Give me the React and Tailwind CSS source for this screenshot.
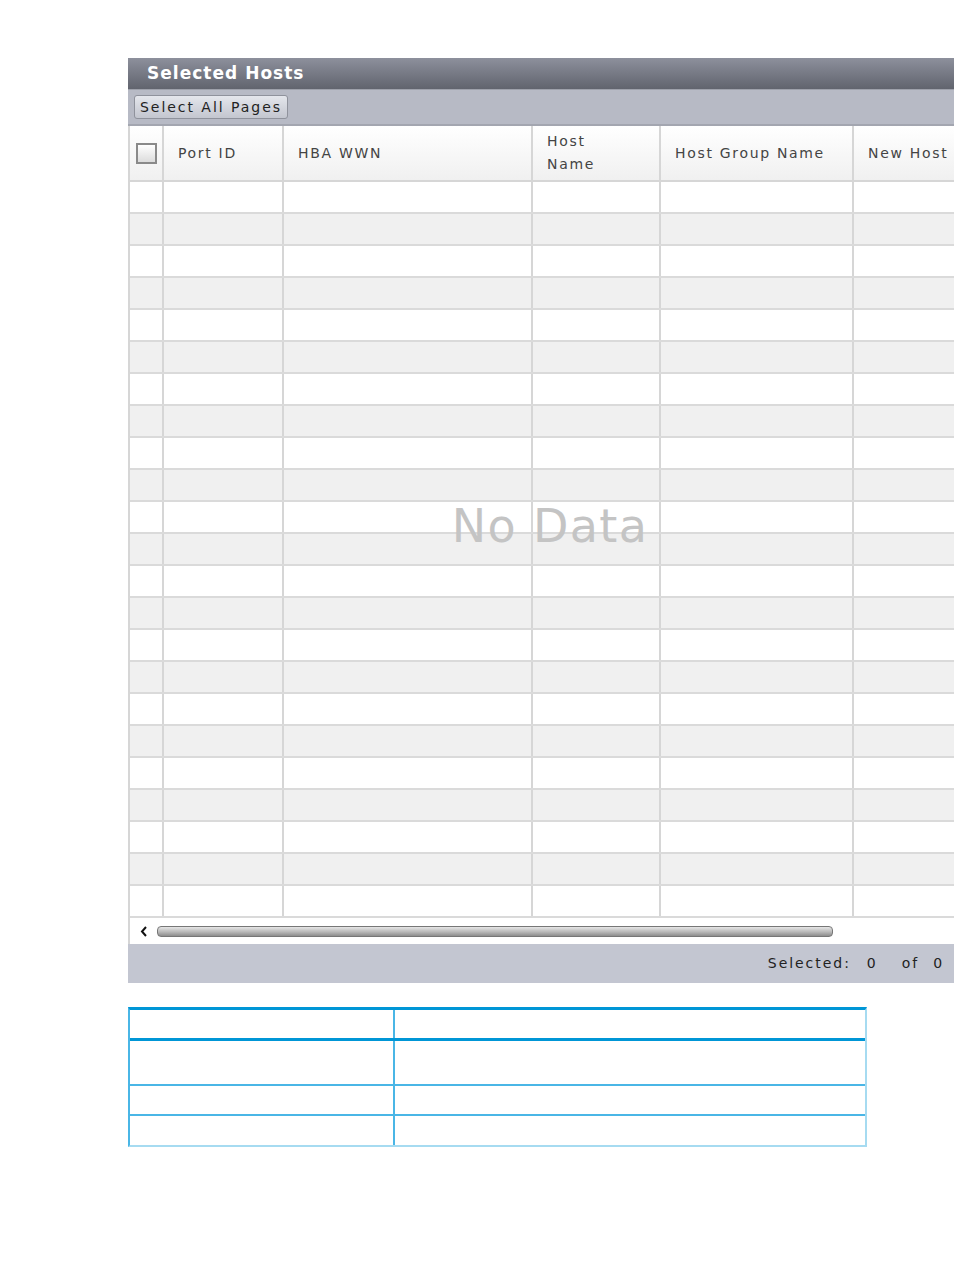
import React from "react";

const COLS = "grid grid-cols-[34px_120px_249px_128px_193px_102px]";
const ROW_COUNT = 23;

const Cell = ({ children, className = "" }) => (
  <div className={`border-r-2 border-[#d6d6d6] ${className}`}>{children}</div>
);

const SelectedHosts = () => {
  const rows = Array.from({ length: ROW_COUNT }, (_, i) => i);

  return (
    <div className="w-[826px] font-['DejaVu_Sans',sans-serif] text-[#333]">
      {/* Title */}
      <div className="h-[31px] bg-gradient-to-b from-[#8d909c] to-[#61646e] flex items-center pl-[19px]">
        <span className="text-white font-bold text-[17px] tracking-[0.06em]">Selected Hosts</span>
      </div>

      {/* Toolbar */}
      <div className="h-[37px] bg-[#b7bac5] border-t border-[#9ea1ab] border-b-2 border-b-[#a3a6b0] flex items-center pl-[6px]">
        <button className="h-[24px] px-[5px] rounded-[3px] border border-[#8f929c] bg-gradient-to-b from-[#e4e6ec] to-[#c3c6cf] text-[14px] tracking-[0.14em] text-[#222] leading-none">
          Select All Pages
        </button>
      </div>

      {/* Table */}
      <div className="relative bg-white border-l-2 border-[#d6d6d6]">
        <div className={`${COLS} h-[56px] bg-gradient-to-b from-white to-[#f0f0f0] border-b-2 border-[#d6d6d6] text-[14px] tracking-[0.12em] text-[#444]`}>
          <Cell className="flex items-center justify-center">
            <div className="w-[21px] h-[21px] border-2 border-[#8a8a8a] bg-gradient-to-b from-white to-[#dcdcdc]" />
          </Cell>
          <Cell className="flex items-center pl-[14px]">Port ID</Cell>
          <Cell className="flex items-center pl-[14px]">HBA WWN</Cell>
          <Cell className="flex items-center pl-[14px] leading-[23px]">
            <span>
              Host
              <br />
              Name
            </span>
          </Cell>
          <Cell className="flex items-center pl-[14px] whitespace-nowrap">Host Group Name</Cell>
          <div className="flex items-center pl-[14px] whitespace-nowrap overflow-hidden">New Host</div>
        </div>

        {rows.map((i) => (
          <div
            key={i}
            className={`${COLS} h-[32px] border-b-2 border-[#dadada] ${i % 2 === 0 ? "bg-white" : "bg-[#f0f0f0]"}`}
          >
            <Cell />
            <Cell />
            <Cell />
            <Cell />
            <Cell />
            <div />
          </div>
        ))}

        <div className="absolute left-0 right-0 top-[377px] flex justify-center pl-[16px] pointer-events-none">
          <span className="text-[46px] text-[#c4c4c4] tracking-[0.03em] leading-none">No Data</span>
        </div>

        {/* Scrollbar */}
        <div className="h-[26px] flex items-center pl-[10px]">
          <svg width="8" height="11" viewBox="0 0 8 11">
            <path d="M6 1 L2 5.5 L6 10" stroke="#111" strokeWidth="2" fill="none" />
          </svg>
          <div className="ml-[9px] w-[676px] h-[11px] rounded-[4px] border border-[#777] bg-gradient-to-b from-[#e6e6e6] via-[#bdbdbd] to-[#8e8e8e]" />
        </div>
      </div>

      {/* Footer */}
      <div className="h-[39px] bg-[#c3c6d1] flex items-center justify-end pr-[10px] text-[14px] tracking-[0.14em] text-[#222]">
        <span>Selected:</span>
        <span className="ml-[16px]">0</span>
        <span className="ml-[24px]">of</span>
        <span className="ml-[14px]">0</span>
      </div>
    </div>
  );
};

const BlueTable = () => (
  <div className="w-[739px] border-t-[3px] border-[#0096d6] border-l-2 border-l-[#4ab6e6] border-r-2 border-r-[#a6dbf1] border-b-2 border-b-[#a6dbf1]">
    <div className="grid grid-cols-[265px_1fr] h-[31px] border-b-[3px] border-[#0096d6]">
      <div className="border-r-2 border-[#4ab6e6]" />
      <div />
    </div>
    <div className="grid grid-cols-[265px_1fr] h-[45px] border-b-2 border-[#4ab6e6]">
      <div className="border-r-2 border-[#4ab6e6]" />
      <div />
    </div>
    <div className="grid grid-cols-[265px_1fr] h-[30px] border-b-2 border-[#4ab6e6]">
      <div className="border-r-2 border-[#4ab6e6]" />
      <div />
    </div>
    <div className="grid grid-cols-[265px_1fr] h-[29px]">
      <div className="border-r-2 border-[#4ab6e6]" />
      <div />
    </div>
  </div>
);

export default function App() {
  return (
    <div className="w-[954px] h-[1270px] bg-white overflow-hidden">
      <div className="ml-[128px] pt-[58px] flex flex-col">
        <SelectedHosts />
        <div className="mt-[24px]">
          <BlueTable />
        </div>
      </div>
    </div>
  );
}
